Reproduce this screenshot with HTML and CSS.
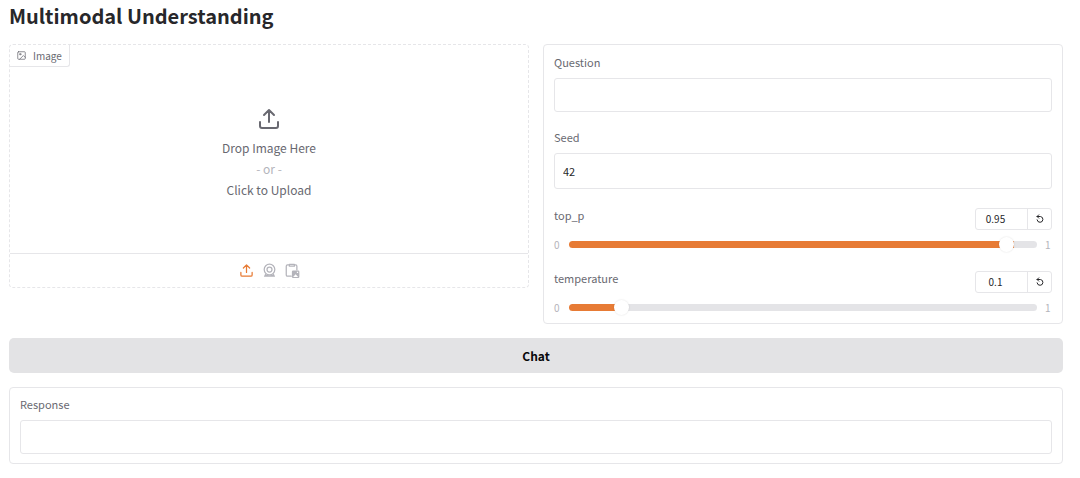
FILE: index.html
```html
<!DOCTYPE html>
<html lang="en">
<head>
<meta charset="utf-8">
<meta name="viewport" content="width=device-width, initial-scale=1">
<title>Multimodal Understanding</title>
<link rel="stylesheet" href="styles.css">
</head>
<body>
<main class="app">
  <h1 class="title">Multimodal Understanding</h1>
  <div class="columns">
    <section class="upload">
      <div class="upload-tag">
        <svg class="tag-icon" viewBox="0 0 24 24"><rect x="2" y="2" width="20" height="20" rx="2"/><circle cx="8.500" cy="8.500" r="2"/><path d="M7 22L17 12l5 5"/></svg>
        <span>Image</span>
      </div>
      <button class="dropzone" type="button">
        <svg class="drop-icon" viewBox="0 0 24 24"><path d="M21 15v4a2 2 0 0 1-2 2H5a2 2 0 0 1-2-2v-4M17 8l-5-5-5 5M12 3v12"/></svg>
        <span>Drop Image Here</span>
        <span class="or">- or -</span>
        <span>Click to Upload</span>
      </button>
      <div class="sources">
        <button class="source active" type="button" aria-label="Upload file">
          <svg viewBox="0 0 24 24"><path d="M21 15v4a2 2 0 0 1-2 2H5a2 2 0 0 1-2-2v-4M17 8l-5-5-5 5M12 3v12"/></svg>
        </button>
        <button class="source" type="button" aria-label="Webcam">
          <svg viewBox="0 0 24 24"><circle cx="12" cy="10.500" r="8.500"/><circle cx="12" cy="10.500" r="4"/><path class="solid" d="M5 17Q12 22 19 17L21 22H3Z"/></svg>
        </button>
        <button class="source" type="button" aria-label="Paste from clipboard">
          <svg viewBox="0 0 24 24"><path d="M10 21H4a2 2 0 0 1-2-2V5a2 2 0 0 1 2-2h3M15 3h2a2 2 0 0 1 2 2v6M7 2h8v3H7z"/><path class="solid" fill-rule="evenodd" d="M13 12h8a2 2 0 0 1 2 2v8a2 2 0 0 1-2 2h-8a2 2 0 0 1-2-2v-8a2 2 0 0 1 2-2ZM13 22.500l4-4.500 4 4.500ZM19 14h2v2h-2Z"/></svg>
        </button>
      </div>
    </section>
    <section class="panel settings">
      <div class="field">
        <label class="label" for="question">Question</label>
        <input class="textbox" id="question" type="text">
      </div>
      <div class="field">
        <label class="label" for="seed">Seed</label>
        <input class="textbox seed" id="seed" type="text" inputmode="numeric" value="42">
      </div>
      <div class="slider-field">
        <div class="slider-head">
          <label class="label" for="top-p">top_p</label>
          <div class="number-group">
            <input class="number" type="text" inputmode="decimal" value="0.95" aria-label="top_p value">
            <button class="reset" type="button" aria-label="Reset top_p"><svg viewBox="0 0 12 12"><path d="M2.500 3H6.500A3.500 3.500 0 1 1 2.500 7M4.500 1L2.500 3l2 2"/></svg></button>
          </div>
        </div>
        <div class="slider-row">
          <span class="bound">0</span>
          <input class="range" id="top-p" type="range" min="0" max="1" step="0.01" value="0.95" style="--fill: 95%">
          <span class="bound">1</span>
        </div>
      </div>
      <div class="slider-field">
        <div class="slider-head">
          <label class="label" for="temperature">temperature</label>
          <div class="number-group">
            <input class="number" type="text" inputmode="decimal" value="0.1" aria-label="temperature value">
            <button class="reset" type="button" aria-label="Reset temperature"><svg viewBox="0 0 12 12"><path d="M2.500 3H6.500A3.500 3.500 0 1 1 2.500 7M4.500 1L2.500 3l2 2"/></svg></button>
          </div>
        </div>
        <div class="slider-row">
          <span class="bound">0</span>
          <input class="range" id="temperature" type="range" min="0" max="1" step="0.01" value="0.1" style="--fill: 10%">
          <span class="bound">1</span>
        </div>
      </div>
    </section>
  </div>
  <button class="chat" type="button">Chat</button>
  <section class="panel">
    <div class="field">
      <label class="label" for="response">Response</label>
      <input class="textbox" id="response" type="text">
    </div>
  </section>
</main>
</body>
</html>
```
FILE: styles.css
```css
:root {
  --line: #e6e6e9;
  --muted: #696971;
  --faint: #b4b4bb;
  --accent: #e77b35;
}
* { box-sizing: border-box; }
body {
  margin: 0;
  background: #fff;
  color: #27272a;
  font-family: "Noto Sans CJK SC", "Noto Sans", sans-serif;
  font-size: 11px;
  line-height: 15px;
}
button, input { font: inherit; color: inherit; margin: 0; }
button { cursor: pointer; }
svg {
  display: block;
  fill: none;
  stroke: currentColor;
  stroke-width: 2;
  stroke-linecap: round;
  stroke-linejoin: round;
}
.solid { fill: currentColor; stroke: none; }
.app {
  display: flex;
  flex-direction: column;
  gap: 14px;
  padding: 2px 17px 14px 9px;
}
.title { margin: 0; font-size: 20px; line-height: 28px; font-weight: 700; }
.columns {
  display: grid;
  grid-template-columns: 1fr 1fr;
  gap: 14px;
  align-items: start;
}
.upload {
  position: relative;
  border: 1px dashed var(--line);
  border-radius: 4px;
}
.upload-tag {
  position: absolute;
  top: 0;
  left: 0;
  display: flex;
  align-items: center;
  gap: 7px;
  padding: 3px 7px;
  border: solid var(--line);
  border-width: 0 1px 1px 0;
  border-radius: 3px 0;
  color: var(--muted);
  font-size: 10px;
}
.tag-icon { width: 9px; height: 9px; }
.dropzone {
  display: flex;
  flex-direction: column;
  align-items: center;
  width: 100%;
  padding: 62px 0 53px;
  border: 0;
  background: none;
  color: var(--muted);
  font-size: 12px;
  line-height: 21px;
}
.drop-icon { width: 24px; height: 24px; margin-bottom: 6px; }
.or { color: var(--faint); }
.sources {
  display: flex;
  justify-content: center;
  gap: 8px;
  padding: 9px 0;
  border-top: 1px solid var(--line);
}
.source { padding: 0; border: 0; background: none; color: var(--faint); }
.source svg { width: 15px; height: 15px; }
.source.active { color: var(--accent); }
.panel { padding: 9px 10px; border: 1px solid var(--line); border-radius: 4px; }
.settings { display: flex; flex-direction: column; gap: 18px; padding: 10px 10px 8px; }
.field { display: flex; flex-direction: column; gap: 8px; }
.label { color: var(--muted); }
.textbox {
  width: 100%;
  height: 34px;
  padding: 0 8px;
  border: 1px solid var(--line);
  border-radius: 3px;
  background: #fff;
}
.seed { height: 36px; }
.slider-field { display: flex; flex-direction: column; gap: 9px; padding: 1px 0 3px; }
.slider-head { display: flex; justify-content: space-between; }
.number-group {
  display: flex;
  width: 77px;
  height: 22px;
  border: 1px solid var(--line);
  border-radius: 3px;
}
.number {
  flex: 1;
  min-width: 0;
  padding: 0 12px 2px 0;
  border: 0;
  background: none;
  font-size: 10px;
  text-align: center;
}
.reset {
  display: grid;
  place-items: center;
  width: 24px;
  padding: 0;
  border: 0;
  border-left: 1px solid var(--line);
  background: none;
}
.reset svg { width: 10px; height: 10px; stroke-width: 1.2; }
.slider-row { display: flex; align-items: center; gap: 8px; height: 10px; }
.bound { width: 7px; color: var(--faint); font-size: 10px; }
.range {
  flex: 1;
  min-width: 0;
  height: 7px;
  border-radius: 4px;
  appearance: none;
  background: linear-gradient(to right, var(--accent) var(--fill), #e4e4e7 var(--fill));
}
.range::-webkit-slider-thumb {
  appearance: none;
  width: 15px;
  height: 15px;
  border-radius: 50%;
  background: #fff;
  box-shadow: 0 0 2px #0002;
}
.chat {
  height: 35px;
  border: 0;
  border-radius: 5px;
  background: #e3e3e5;
  color: #09090b;
  font-size: 12px;
  font-weight: 700;
}
```
